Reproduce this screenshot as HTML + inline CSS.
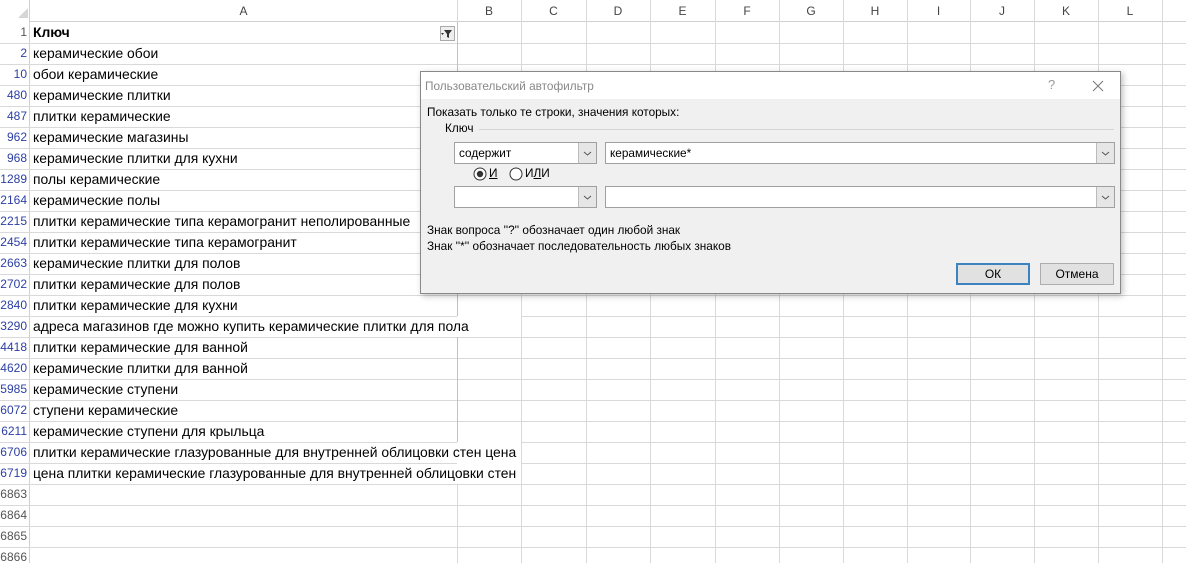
<!DOCTYPE html>
<html><head><meta charset="utf-8"><style>
*{margin:0;padding:0;box-sizing:border-box}
body{width:1186px;height:563px;overflow:hidden;background:#fff;font-family:"Liberation Sans",sans-serif;position:relative}
.a{position:absolute}
.vl{position:absolute;top:0;height:563px;width:1px;background:#d9d9d9}
.hl{position:absolute;left:0;width:1186px;height:1px;background:#d9d9d9}
.ch{position:absolute;top:0;height:22px;font-size:12px;color:#444;text-align:center;line-height:22px}
.rn{position:absolute;left:0;width:29px;text-align:right;padding-right:2px;font-size:12px;color:#2b3fa5;height:21px;line-height:21px}
.rn.g{color:#555}
.ct{position:absolute;left:33px;font-size:13.9px;color:#000;line-height:21px;white-space:nowrap}
.d{font-family:"Liberation Sans",sans-serif;font-size:11.8px;color:#000}
.box{position:absolute;background:#fff;border:1px solid #a0a0a0}
.arr{position:absolute;top:0;right:0;width:18px;height:100%;background:#e6e6e6;border-left:1px solid #bbb}
.btn{position:absolute;height:22px;background:#e1e1e1;border:1px solid #adadad;font-size:12px;text-align:center;line-height:20px}
</style></head><body>
<div class="a" style="left:0;top:0;width:1186px;height:22px;background:#fff;border-bottom:1px solid #d0d0d0"></div>
<div class="a" style="left:0;top:0;width:30px;height:563px;background:#fff;border-right:1px solid #d0d0d0"></div>
<svg class="a" style="left:18px;top:8px" width="10" height="10"><path d="M10 0L10 10L0 10Z" fill="#d6d6d6"/></svg>
<div class="vl" style="left:457px"></div><div class="vl" style="left:521px"></div><div class="vl" style="left:586px"></div><div class="vl" style="left:650px"></div><div class="vl" style="left:715px"></div><div class="vl" style="left:779px"></div><div class="vl" style="left:843px"></div><div class="vl" style="left:907px"></div><div class="vl" style="left:970px"></div><div class="vl" style="left:1034px"></div><div class="vl" style="left:1098px"></div><div class="vl" style="left:1162px"></div>
<div class="ch" style="left:30px;width:427px">A</div><div class="ch" style="left:457px;width:64px">B</div><div class="ch" style="left:521px;width:65px">C</div><div class="ch" style="left:586px;width:64px">D</div><div class="ch" style="left:650px;width:65px">E</div><div class="ch" style="left:715px;width:64px">F</div><div class="ch" style="left:779px;width:64px">G</div><div class="ch" style="left:843px;width:64px">H</div><div class="ch" style="left:907px;width:63px">I</div><div class="ch" style="left:970px;width:64px">J</div><div class="ch" style="left:1034px;width:64px">K</div><div class="ch" style="left:1098px;width:64px">L</div>
<div class="hl" style="top:43px"></div><div class="hl" style="top:64px"></div><div class="hl" style="top:85px"></div><div class="hl" style="top:106px"></div><div class="hl" style="top:127px"></div><div class="hl" style="top:148px"></div><div class="hl" style="top:169px"></div><div class="hl" style="top:190px"></div><div class="hl" style="top:211px"></div><div class="hl" style="top:232px"></div><div class="hl" style="top:253px"></div><div class="hl" style="top:274px"></div><div class="hl" style="top:295px"></div><div class="hl" style="top:316px"></div><div class="hl" style="top:337px"></div><div class="hl" style="top:358px"></div><div class="hl" style="top:379px"></div><div class="hl" style="top:400px"></div><div class="hl" style="top:421px"></div><div class="hl" style="top:442px"></div><div class="hl" style="top:463px"></div><div class="hl" style="top:484px"></div><div class="hl" style="top:505px"></div><div class="hl" style="top:526px"></div><div class="hl" style="top:547px"></div>
<div class="a" style="left:30px;top:22px;width:428px;height:420px;border-right:1px solid #c0c0c0"></div>
<div class="a" style="left:457px;top:316px;width:64px;height:21px;background:#fff"></div>
<div class="a" style="left:457px;top:442px;width:64px;height:42px;background:#fff"></div>
<div class="rn g" style="top:22px">1</div><div class="ct" style="top:22px;font-weight:bold">Ключ</div>
<div class="a" style="left:440px;top:26px;width:15px;height:15px;background:#eee;border:1px solid #aaa"><svg width="13" height="13"><path d="M3 3h8l-3 4v4l-2-1v-3z" fill="#333"/><path d="M0 6h3l-1.5 2z" fill="#333"/></svg></div>
<div class="rn" style="top:43px">2</div><div class="ct" style="top:43px">керамические обои</div>
<div class="rn" style="top:64px">10</div><div class="ct" style="top:64px">обои керамические</div>
<div class="rn" style="top:85px">480</div><div class="ct" style="top:85px">керамические плитки</div>
<div class="rn" style="top:106px">487</div><div class="ct" style="top:106px">плитки керамические</div>
<div class="rn" style="top:127px">962</div><div class="ct" style="top:127px">керамические магазины</div>
<div class="rn" style="top:148px">968</div><div class="ct" style="top:148px">керамические плитки для кухни</div>
<div class="rn" style="top:169px">1289</div><div class="ct" style="top:169px">полы керамические</div>
<div class="rn" style="top:190px">2164</div><div class="ct" style="top:190px">керамические полы</div>
<div class="rn" style="top:211px">2215</div><div class="ct" style="top:211px">плитки керамические типа керамогранит неполированные</div>
<div class="rn" style="top:232px">2454</div><div class="ct" style="top:232px">плитки керамические типа керамогранит</div>
<div class="rn" style="top:253px">2663</div><div class="ct" style="top:253px">керамические плитки для полов</div>
<div class="rn" style="top:274px">2702</div><div class="ct" style="top:274px">плитки керамические для полов</div>
<div class="rn" style="top:295px">2840</div><div class="ct" style="top:295px">плитки керамические для кухни</div>
<div class="rn" style="top:316px">3290</div><div class="ct" style="top:316px">адреса магазинов где можно купить керамические плитки для пола</div>
<div class="rn" style="top:337px">4418</div><div class="ct" style="top:337px">плитки керамические для ванной</div>
<div class="rn" style="top:358px">4620</div><div class="ct" style="top:358px">керамические плитки для ванной</div>
<div class="rn" style="top:379px">5985</div><div class="ct" style="top:379px">керамические ступени</div>
<div class="rn" style="top:400px">6072</div><div class="ct" style="top:400px">ступени керамические</div>
<div class="rn" style="top:421px">6211</div><div class="ct" style="top:421px">керамические ступени для крыльца</div>
<div class="rn" style="top:442px">6706</div><div class="ct" style="top:442px">плитки керамические глазурованные для внутренней облицовки стен цена</div>
<div class="rn" style="top:463px">6719</div><div class="ct" style="top:463px">цена плитки керамические глазурованные для внутренней облицовки стен</div>
<div class="rn g" style="top:484px">6863</div><div class="rn g" style="top:505px">6864</div><div class="rn g" style="top:526px">6865</div><div class="rn g" style="top:547px">6866</div>

<div class="a d" style="left:420px;top:71px;width:701px;height:223px;background:#f0f0f0;border:1px solid #888;box-shadow:2px 2px 6px rgba(0,0,0,.25)">
 <div class="a" style="left:0;top:0;width:699px;height:27px;background:#fff"></div>
 <div class="a" style="left:4px;top:7px;color:#888">Пользовательский автофильтр</div>
 <div class="a" style="left:627px;top:5px;color:#999;font-size:13px">?</div>
 <svg class="a" style="left:671px;top:8px" width="12" height="12"><path d="M1 1L11 11M11 1L1 11" stroke="#777" stroke-width="1"/></svg>
 <div class="a" style="left:6px;top:33px">Показать только те строки, значения которых:</div>
 <div class="a" style="left:24px;top:49px">Ключ</div>
 <div class="a" style="left:58px;top:57px;width:635px;height:1px;background:#d5d5d5"></div>
 <div class="box" style="left:33px;top:70px;width:143px;height:22px"><span class="a" style="left:4px;top:3px">содержит</span><div class="arr"><svg width="17" height="20"><path d="M5 9l3.5 3 3.5-3" stroke="#555" fill="none"/></svg></div></div>
 <div class="box" style="left:184px;top:70px;width:510px;height:22px"><span class="a" style="left:4px;top:3px">керамические*</span><div class="arr"><svg width="17" height="20"><path d="M5 9l3.5 3 3.5-3" stroke="#555" fill="none"/></svg></div></div>
 <svg class="a" style="left:52px;top:95px" width="14" height="14"><circle cx="7" cy="7" r="6" fill="#fff" stroke="#333"/><circle cx="7" cy="7" r="3.2" fill="#333"/></svg>
 <div class="a" style="left:68px;top:94px;text-decoration:underline">И</div>
 <svg class="a" style="left:88px;top:95px" width="14" height="14"><circle cx="7" cy="7" r="6" fill="#fff" stroke="#333"/></svg>
 <div class="a" style="left:104px;top:94px">И<u>Л</u>И</div>
 <div class="box" style="left:33px;top:114px;width:143px;height:22px"><div class="arr"><svg width="17" height="20"><path d="M5 9l3.5 3 3.5-3" stroke="#555" fill="none"/></svg></div></div>
 <div class="box" style="left:184px;top:114px;width:510px;height:22px"><div class="arr"><svg width="17" height="20"><path d="M5 9l3.5 3 3.5-3" stroke="#555" fill="none"/></svg></div></div>
 <div class="a" style="left:6px;top:151px">Знак вопроса ''?'' обозначает один любой знак</div>
 <div class="a" style="left:6px;top:167px">Знак ''*'' обозначает последовательность любых знаков</div>
 <div class="btn" style="left:535px;top:191px;width:74px;border:2px solid #3c84c0;line-height:18px">ОК</div>
 <div class="btn" style="left:619px;top:191px;width:74px">Отмена</div>
</div>
</body></html>
